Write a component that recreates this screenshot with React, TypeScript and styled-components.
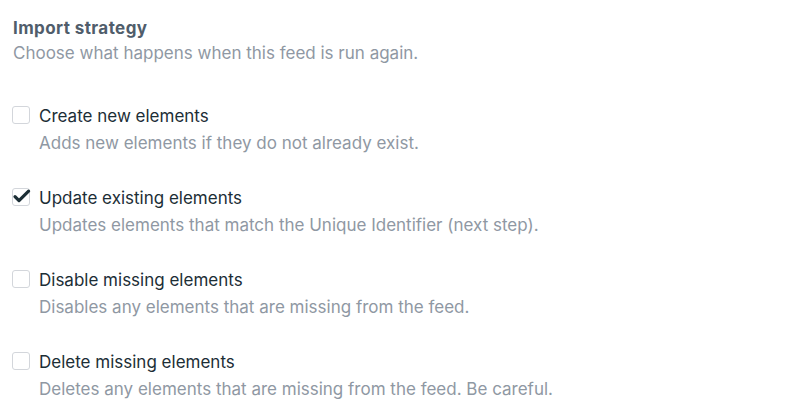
import styled, { createGlobalStyle } from 'styled-components';

const GlobalStyle = createGlobalStyle`
  body {
    margin: 0;
    background: #ffffff;
    font-family: Inter, 'Noto Sans', sans-serif;
    -webkit-font-smoothing: antialiased;
  }
`;

const Field = styled.div`
  padding: 18px 13px;
`;

const Heading = styled.h2`
  margin: 0;
  font-size: 17px;
  line-height: 20px;
  font-weight: 700;
  letter-spacing: 0.4px;
  color: #505d6b;
`;

const Instructions = styled.p`
  margin: 4px 0 0;
  font-size: 17px;
  line-height: 22px;
  color: #8f98a3;
`;

const List = styled.div`
  display: flex;
  flex-direction: column;
  gap: 33px;
  margin-top: 41px;
`;

const Option = styled.label`
  display: grid;
  grid-template-columns: 18px 1fr;
  column-gap: 8px;
  row-gap: 5px;
  cursor: pointer;
`;

const Box = styled.span`
  position: relative;
  width: 18px;
  height: 18px;
  margin-top: 1px;
  margin-left: -1px;
  box-sizing: border-box;
  border: 1px solid #d3d6db;
  border-radius: 3px;
`;

const Check = styled.svg`
  position: absolute;
  left: -1px;
  top: -1px;
  width: 18px;
  height: 18px;
  overflow: visible;
`;

const Label = styled.span`
  font-size: 17px;
  line-height: 22px;
  color: #1c2e36;
`;

const Hint = styled.span`
  grid-column: 2;
  font-size: 17px;
  line-height: 22px;
  color: #8f98a3;
`;

const options = [
  { label: 'Create new elements', hint: 'Adds new elements if they do not already exist.', checked: false },
  { label: 'Update existing elements', hint: 'Updates elements that match the Unique Identifier (next step).', checked: true },
  { label: 'Disable missing elements', hint: 'Disables any elements that are missing from the feed.', checked: false },
  { label: 'Delete missing elements', hint: 'Deletes any elements that are missing from the feed. Be careful.', checked: false },
];

function App() {
  return (
    <>
      <GlobalStyle />
      <Field>
        <Heading>Import strategy</Heading>
        <Instructions>Choose what happens when this feed is run again.</Instructions>
        <List>
          {options.map(o => (
            <Option key={o.label}>
              <Box>
                {o.checked && (
                  <Check viewBox="0 0 18 18">
                    <path d="M3 8.6 L7 12.6 L16.6 3.2" fill="none" stroke="#1c2e36" strokeWidth="3.2" strokeLinecap="round" strokeLinejoin="round" />
                  </Check>
                )}
              </Box>
              <Label>{o.label}</Label>
              <Hint>{o.hint}</Hint>
            </Option>
          ))}
        </List>
      </Field>
    </>
  );
}

export default App;
